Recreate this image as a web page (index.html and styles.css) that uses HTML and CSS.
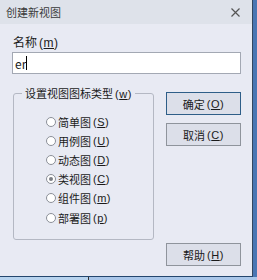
FILE: index.html
```html
<!DOCTYPE html>
<html lang="zh">
<head>
<meta charset="utf-8">
<title>创建新视图</title>
<link rel="stylesheet" href="styles.css">
</head>
<body>
<div class="screen">
  <div class="top">
    <div class="dialog">
      <div class="titlebar">
        <span class="title">创建新视图</span>
        <svg class="close" width="9" height="9" viewBox="0 0 9 9"><path d="M0.5 0.5 L8.5 8.5 M8.5 0.5 L0.5 8.5" stroke="#555" stroke-width="1.2" fill="none"/></svg>
      </div>
      <div class="content">
        <div class="name-label">名称<span class="mn">(<u>m</u>)</span></div>
        <div class="input">er<span class="caret"></span></div>
        <div class="main">
          <fieldset class="group">
            <legend>设置视图图标类型<span class="mn">(<u>w</u>)</span></legend>
            <ul class="radios">
              <li><span class="radio"></span>简单图<span class="mn">(<u>S</u>)</span></li>
              <li><span class="radio"></span>用例图<span class="mn">(<u>U</u>)</span></li>
              <li><span class="radio"></span>动态图<span class="mn">(<u>D</u>)</span></li>
              <li><span class="radio checked"></span>类视图<span class="mn">(<u>C</u>)</span></li>
              <li><span class="radio"></span>组件图<span class="mn">(<u>m</u>)</span></li>
              <li><span class="radio"></span>部署图<span class="mn">(<u>p</u>)</span></li>
            </ul>
          </fieldset>
          <div class="buttons">
            <div class="btn default">确定<span class="mn">(<u>O</u>)</span></div>
            <div class="btn">取消<span class="mn">(<u>C</u>)</span></div>
          </div>
        </div>
        <div class="footer">
          <div class="btn">帮助<span class="mn">(<u>H</u>)</span></div>
        </div>
      </div>
    </div>
    <div class="side"></div>
  </div>
  <div class="bottom">
    <div class="bottom-a"></div>
    <div class="bottom-b"></div>
  </div>
</div>
</body>
</html>
```
FILE: styles.css
```css
html, body {
  margin: 0;
  padding: 0;
}
body {
  width: 257px;
  height: 280px;
  overflow: hidden;
  font-family: "Noto Sans CJK SC", "Liberation Sans", sans-serif;
  color: #1a1a1a;
}
.screen {
  display: flex;
  flex-direction: column;
  width: 257px;
  height: 280px;
}
.top {
  display: flex;
  height: 277px;
}
.dialog {
  width: 252px;
  height: 276px;
  background: #e8eaf3;
  border-right: 1px solid #33465f;
  border-bottom: 1px solid #23466e;
  display: flex;
  flex-direction: column;
}
.side {
  flex: 1;
  background: #4a76b3;
}
.bottom {
  display: flex;
  flex: 1;
}
.bottom-a {
  width: 88px;
  background: #b7d3ee;
  border-right: 1px solid #333;
}
.bottom-b {
  flex: 1;
  background: #a9c6e9;
}
.titlebar {
  height: 24px;
  flex: none;
  background: #dee2ea;
  display: flex;
  align-items: center;
  padding: 0 12px 0 6px;
}
.title {
  font-size: 11px;
  color: #3a3a3a;
  line-height: 24px;
}
.close {
  margin-left: auto;
  margin-top: 1px;
}
.content {
  padding: 0 11px 0 12px;
  display: flex;
  flex-direction: column;
}
.mn {
  font-family: "Liberation Sans", sans-serif;
  margin-left: 2px;
  letter-spacing: 0.5px;
  line-height: 0;
}
.name-label {
  font-size: 12px;
  line-height: 16px;
  height: 16px;
  margin-top: 10px;
  padding-left: 1px;
}
.input {
  margin-top: 2px;
  height: 22px;
  box-sizing: border-box;
  border: 1px solid #a3a8b3;
  background: #fff;
  font-size: 12px;
  padding-left: 2px;
  display: flex;
  align-items: center;
}
.caret {
  display: inline-block;
  width: 1px;
  height: 14px;
  background: #000;
}
.main {
  display: flex;
  align-items: flex-start;
  margin-top: 12px;
}
.group {
  margin: 0 0 0 1px;
  padding: 0;
  width: 141px;
  height: 154px;
  box-sizing: border-box;
  border: 1px solid #b4b8c3;
  border-radius: 3px;
}
.group legend {
  font-size: 11px;
  line-height: 14px;
  height: 14px;
  margin-left: 8px;
  padding: 0 3px;
}
.radios {
  list-style: none;
  margin: 0;
  padding: 12px 0 0 32px;
}
.radios li {
  display: flex;
  align-items: center;
  height: 19.2px;
  font-size: 11px;
}
.radio {
  width: 8px;
  height: 8px;
  border: 1px solid #8b8f98;
  border-radius: 50%;
  background: #fff;
  margin-right: 2px;
  display: flex;
  align-items: center;
  justify-content: center;
}
.radio.checked::after {
  content: "";
  width: 4px;
  height: 4px;
  border-radius: 50%;
  background: #7b7e85;
}
.buttons {
  margin-left: auto;
  margin-top: 6px;
  display: flex;
  flex-direction: column;
  gap: 8px;
}
.btn {
  width: 75px;
  height: 23px;
  box-sizing: border-box;
  border: 1px solid #8f949c;
  background: #dcdfe9;
  font-size: 11px;
  display: flex;
  align-items: center;
  justify-content: center;
}
.btn.default {
  border-color: #2e5e88;
}
.footer {
  display: flex;
  justify-content: flex-end;
  margin-top: 3px;
}
```
